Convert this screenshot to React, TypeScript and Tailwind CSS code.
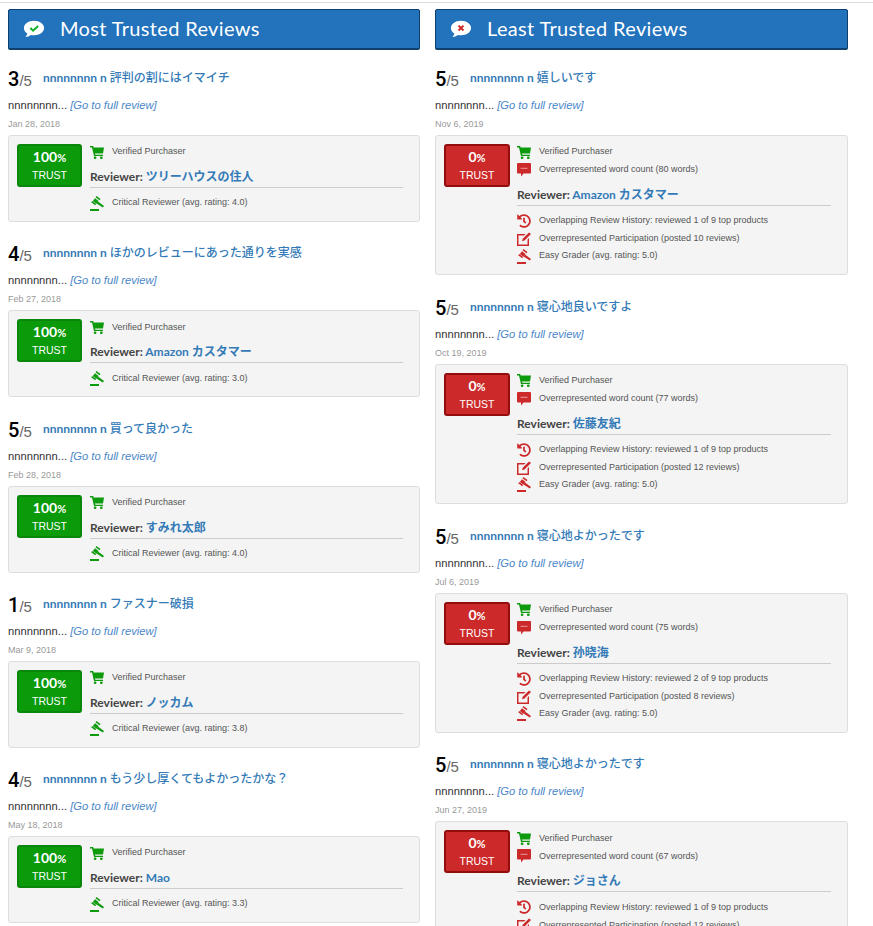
import { FaHistory } from 'react-icons/fa'

const sans = 'font-["Liberation_Sans","Noto_Sans_CJK_JP",sans-serif]'
const head = 'font-["Lato","Noto_Sans_CJK_JP",sans-serif]'

function Cart() {
  return (
    <svg viewBox="0 0 14 13" className="w-[14px] h-[13px] text-[#0d9a0d]" fill="currentColor">
      <path d="M0 0h3.200l.4 1.500H14l-1 6H5l.3 1.200H13V10H4L2 1.400H0z" />
      <rect x="3.800" y="10.500" width="2.600" height="2.500" rx="1" />
      <rect x="10" y="10.500" width="2.600" height="2.500" rx="1" />
    </svg>
  )
}

function CommentDash() {
  return (
    <svg viewBox="0 0 14 14" className="w-[14px] h-[14px] text-[#cc2a2a]" fill="currentColor">
      <path d="M1 0h12a1 1 0 0 1 1 1v8.500a1 1 0 0 1-1 1H6.500L4 13.500v-3H1a1 1 0 0 1-1-1V1a1 1 0 0 1 1-1z" />
      <path d="M3.500 4.800h7v1h-7z" fill="#e99" />
    </svg>
  )
}

function Gavel({ className }: { className: string }) {
  return (
    <svg viewBox="0 0 14 15" className={`w-[14px] h-[15px] ${className}`} fill="currentColor">
      <path d="M6.500 0l4 3-1 1.200-4-3z" />
      <path d="M5 2.200l3.600 2.700-2.200 2.900-3.600-2.700z" />
      <path d="M2.200 5l4 3-1 1.200-4-3z" />
      <path d="M8 5.500l6 4.500-1.200 1.500-6.300-4z" />
      <rect x="0" y="13" width="9" height="2" />
    </svg>
  )
}

function EditBox({ className }: { className: string }) {
  return (
    <svg viewBox="0 0 14 14" className={`w-[14px] h-[14px] ${className}`} fill="currentColor">
      <path d="M0 2h8.500L7 3.500H1.500v9h9V7.500L12 6v8H0z" />
      <path d="M12 .5L14 2 7.500 8.500 5 9.200l.7-2.500z" />
    </svg>
  )
}

function Bubble({ good }: { good: boolean }) {
  return (
    <svg viewBox="0 0 24 20" className="w-[22px] h-[20px]">
      <path d="M12 1C5.600 1 1 4.600 1 9c0 2.500 1.500 4.600 3.800 6-.3 1.400-1.200 2.700-2.300 3.700 2.300-.1 4.500-1 6.100-2.200 1.100.2 2.200.4 3.400.4 6.400 0 11-3.500 11-7.900S18.400 1 12 1z" fill="#fff" />
      {good ? (
        <path d="M8 9l3 2.800 5.500-5" fill="none" stroke="#12b02a" strokeWidth="2.200" />
      ) : (
        <path d="M9.300 6.300l5.400 5.400M14.700 6.300l-5.400 5.400" fill="none" stroke="#cc2a2a" strokeWidth="2.200" />
      )}
    </svg>
  )
}

function Header({ title, good }: { title: string; good: boolean }) {
  return (
    <div className="h-10 flex items-center bg-[#2272bc] border border-[#0f3f6c] rounded-[2px] pl-[14px] shadow-[0_1px_0_#0f3f6c]">
      <Bubble good={good} />
      <h2 className={`ml-[15px] mb-[3px] text-[20px] text-white tracking-[0.35px] ${head}`}>{title}</h2>
    </div>
  )
}

function Flag({ icon, text, tight }: { icon: React.ReactNode; text: string; tight?: boolean }) {
  return (
    <div className={`flex items-center h-[18px] ${tight ? '-mt-[1px]' : ''}`}>
      <div className="w-[22px] flex items-center">{icon}</div>
      <span className="text-[9px] text-[#555]">{text}</span>
    </div>
  )
}

type Review = {
  score: number
  title: string
  date: string
  reviewer: string
  words?: number
  notes: { kind: 'gavel' | 'history' | 'edit'; text: string }[]
}

function ReviewItem({ r, good }: { r: Review; good: boolean }) {
  const tone = good ? 'text-[#0d9a0d]' : 'text-[#cc2a2a]'
  return (
    <div className={good ? 'mb-[19.250px]' : 'mb-[19.750px]'}>
      <div className="flex items-end h-[26px]">
        <span className={'text-[20px] leading-[26px] text-black font-medium font-["Roboto",sans-serif]'}>{r.score}</span>
        <span className="text-[15px] leading-[22px] text-[#666]">/5</span>
        <a className={`ml-[11px] mb-[4px] text-[12px] font-bold text-[#337ab7] leading-[20px] ${head}`}>
          nnnnnnnn n <span className="font-medium">{r.title}</span>
        </a>
      </div>
      <p className="mt-[5px] text-[11.200px] leading-[17px] text-[#333]">
        nnnnnnnn... <a className="italic text-[#4a86c8]">[Go to full review]</a>
      </p>
      <p className="mt-[4px] text-[9px] leading-[13px] text-[#999]">{r.date}</p>
      <div className="mt-[4px] flex bg-[#f4f4f4] border border-[#ddd] rounded-[3px] pl-[8px] pr-[16px] pt-[7px] pb-[9px]">
        <div
          className={`h-[43px] mt-[1px] shrink-0 rounded-[3px] border-2 text-white text-center ${
            good ? 'w-[65px] bg-[#0a9a0a] border-[#0a860a]' : 'w-[66px] bg-[#cc2a2a] border-[#930d0d]'
          }`}
        >
          <div className={`text-[14px] leading-[18px] mt-[2px] font-bold ${head}`}>
            {good ? '100' : '0'}
            <span className="text-[11px]">%</span>
          </div>
          <div className="text-[10.500px] leading-[12px] mt-[2px]">TRUST</div>
        </div>
        <div className={`flex-1 min-w-0 ${good ? 'ml-[8px]' : 'ml-[7px]'}`}>
          <Flag icon={<Cart />} text="Verified Purchaser" />
          {r.words && <Flag icon={<CommentDash />} text={`Overrepresented word count (${r.words} words)`} />}
          <div className={`mt-[7px] pb-[1px] border-b border-[#ccc] text-[12px] leading-[18px] font-bold text-[#444] ${head}`}>
            Reviewer: <a className="text-[#337ab7]">{r.reviewer}</a>
          </div>
          <div className="mt-[6px]">
            {r.notes.map(n => (
              <Flag
                key={n.text}
                text={n.text}
                tight={!good && n.kind === 'gavel'}
                icon={
                  n.kind === 'gavel' ? (
                    <Gavel className={tone} />
                  ) : n.kind === 'history' ? (
                    <FaHistory className={`w-[14px] h-[14px] ${tone}`} />
                  ) : (
                    <EditBox className={tone} />
                  )
                }
              />
            ))}
          </div>
        </div>
      </div>
    </div>
  )
}

const most: Review[] = [
  { score: 3, title: '評判の割にはイマイチ', date: 'Jan 28, 2018', reviewer: 'ツリーハウスの住人', notes: [{ kind: 'gavel', text: 'Critical Reviewer (avg. rating: 4.0)' }] },
  { score: 4, title: 'ほかのレビューにあった通りを実感', date: 'Feb 27, 2018', reviewer: 'Amazon カスタマー', notes: [{ kind: 'gavel', text: 'Critical Reviewer (avg. rating: 3.0)' }] },
  { score: 5, title: '買って良かった', date: 'Feb 28, 2018', reviewer: 'すみれ太郎', notes: [{ kind: 'gavel', text: 'Critical Reviewer (avg. rating: 4.0)' }] },
  { score: 1, title: 'ファスナー破損', date: 'Mar 9, 2018', reviewer: 'ノッカム', notes: [{ kind: 'gavel', text: 'Critical Reviewer (avg. rating: 3.8)' }] },
  { score: 4, title: 'もう少し厚くてもよかったかな？', date: 'May 18, 2018', reviewer: 'Mao', notes: [{ kind: 'gavel', text: 'Critical Reviewer (avg. rating: 3.3)' }] },
]

function leastNotes(top: number, posted: number): Review['notes'] {
  return [
    { kind: 'history', text: `Overlapping Review History: reviewed ${top} of 9 top products` },
    { kind: 'edit', text: `Overrepresented Participation (posted ${posted} reviews)` },
    { kind: 'gavel', text: 'Easy Grader (avg. rating: 5.0)' },
  ]
}

const least: Review[] = [
  { score: 5, title: '嬉しいです', date: 'Nov 6, 2019', reviewer: 'Amazon カスタマー', words: 80, notes: leastNotes(1, 10) },
  { score: 5, title: '寝心地良いですよ', date: 'Oct 19, 2019', reviewer: '佐藤友紀', words: 77, notes: leastNotes(1, 12) },
  { score: 5, title: '寝心地よかったです', date: 'Jul 6, 2019', reviewer: '孙晓海', words: 75, notes: leastNotes(2, 8) },
  { score: 5, title: '寝心地よかったです', date: 'Jun 27, 2019', reviewer: 'ジョさん', words: 67, notes: leastNotes(1, 12) },
]

export default function App() {
  return (
    <div className={`h-[926px] overflow-hidden bg-white ${sans}`}>
      <div className="mt-[2px] border-t border-[#ddd] flex pl-[8px] pr-[25px] pt-[6px] gap-[15px]">
        <div className="w-[412px]">
          <Header title="Most Trusted Reviews" good />
          <div className="mt-[17px]">
            {most.map(r => (
              <ReviewItem key={r.date} r={r} good />
            ))}
          </div>
        </div>
        <div className="w-[413px]">
          <Header title="Least Trusted Reviews" good={false} />
          <div className="mt-[17px]">
            {least.map(r => (
              <ReviewItem key={r.date} r={r} good={false} />
            ))}
          </div>
        </div>
      </div>
    </div>
  )
}
